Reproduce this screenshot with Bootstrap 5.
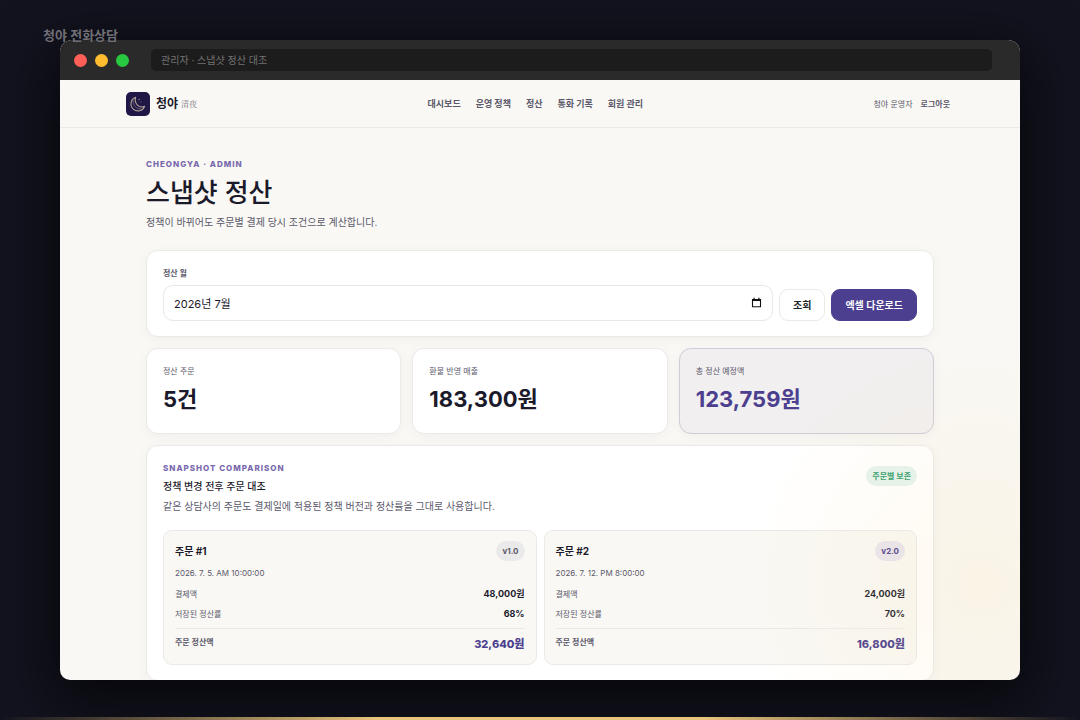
<!DOCTYPE html>
<html lang="ko">
<head>
<meta charset="utf-8">
<meta name="viewport" content="width=device-width, initial-scale=1">
<title>관리자 · 스냅샷 정산 대조</title>
<link href="https://cdn.jsdelivr.net/npm/bootstrap@5.3.0/dist/css/bootstrap.min.css" rel="stylesheet">
<style>
:root { --ink:#1b1a2b; --soft:#5b596b; --violet:#4c3f8f; --line:#ebeae8; --paper:#f9f8f4; }
body { font-family:Inter,"Noto Sans CJK KR",sans-serif; font-size:10px; line-height:16px; color:var(--ink); background:#13131f; }
.stage { height:100vh; padding:40px 60px; overflow:hidden; }
.stage-label { top:27px; left:43px; font-size:13px; font-weight:600; color:#6f6f75; z-index:3; }
.stage-line { height:3px; background:linear-gradient(90deg,transparent,#e8c47c 35%,#e8c47c 65%,transparent); }
.app-window { border-radius:12px 12px 10px 10px; background:var(--paper); box-shadow:0 16px 56px 8px rgba(0,0,0,.65); }
.app-window::after { content:""; position:absolute; inset:0; pointer-events:none; background:radial-gradient(circle 240px at 96% 85%, rgba(255,220,160,.16), rgba(255,220,160,.08) 50%, transparent); }
.title-bar { height:40px; padding:0 28px 0 14px; background:#2a2a2a; }
.dot { width:13px; height:13px; border-radius:50%; }
.dot-close { background:#ff5f57; }
.dot-min { background:#febc2e; }
.dot-max { background:#28c840; }
.address { height:22px; padding:0 10px; margin-left:14px; border-radius:5px; background:#1c1c1c; color:#737373; }
.site-head { height:48px; border-bottom:1px solid var(--line); }
.wrap { width:100%; max-width:828px; margin:0 auto; }
.logo { width:24px; height:24px; margin-right:6px; }
.brand-name { font-size:12px; font-weight:700; color:var(--ink); margin-right:3px; }
.brand-han { font-family:"Noto Serif CJK KR","Noto Sans CJK KR",serif; font-size:8px; color:#77757f; }
.site-head a { color:var(--soft); text-decoration:none; }
.site-nav { font-size:9px; font-weight:700; gap:15px; }
.account { font-size:8px; color:var(--soft); padding-right:4px; }
.eyebrow { font-size:8px; line-height:12px; font-weight:800; letter-spacing:1px; color:#7a69ae; }
.page-top { margin-top:30px; }
h1 { font-size:26px; line-height:36px; font-weight:500; margin:5px 0 3px; }
h2 { font-size:10px; line-height:16px; font-weight:500; margin:4px 0; }
.soft { color:var(--soft); }
.panel { background:#fff; border:1px solid var(--line); border-radius:12px; box-shadow:0 2px 12px rgba(40,35,70,.04); padding:16px 16px 15px; }
.filter { gap:6px; }
.filter label { margin-bottom:6px; }
.tiny { font-size:8px; line-height:12px; color:var(--soft); }
.month { height:36px; font-size:11px; border:1px solid #e8e7e9; border-radius:10px; padding:0 10px; color:var(--ink); }
.month-icon { position:absolute; right:11px; top:12px; width:11px; height:11px; }
.act { height:32px; padding:0 13px; font-size:10px; font-weight:700; border-radius:9px; border:1px solid var(--line); }
.act-main { color:#fff; background:var(--violet); border-color:var(--violet); }
.act-main:hover { color:#fff; background:#3f347b; }
.stats { gap:11px; margin:11px 0; }
.stats > *, .orders > * { flex:1 1 0; }
.orders { gap:7px; }
.stat { height:86px; }
.stat-num { font-size:22px; line-height:28px; font-weight:700; margin-top:8px; }
.stat-total { background:#f1efef; border-color:#cfcbd9; }
.violet { color:var(--violet) !important; }
.pill { font-size:8px; line-height:12px; font-weight:700; padding:4px 6px; border-radius:10px; }
.pill-ok { background:#e5f4ed; color:#2f9c6c; }
.pill-ver { background:#ebeaea; color:var(--soft); }
.pill-new { background:#e8e4ee; color:var(--violet); }
.order { background:var(--paper); border:1px solid var(--line); border-radius:9px; padding:10px 11px 5px; }
.order-date { margin:6px 0 4px; }
.order table { width:100%; font-size:9px; }
.order th { font-size:8px; font-weight:400; color:var(--soft); }
.order td { text-align:right; font-weight:700; }
.order th, .order td { height:21px; line-height:12px; vertical-align:middle; padding:0; }
.order tbody tr:last-child > * { height:24px; padding-bottom:4px; }
.order tfoot th, .order tfoot td { height:31px; border-top:1px solid var(--line); }
.order tfoot th { font-weight:700; padding-bottom:4px; }
.order tfoot td { font-size:11px; font-weight:800; }
</style>
</head>
<body>
<div class="stage position-relative">
  <div class="stage-label position-absolute">청야 전화상담</div>
  <div class="app-window position-relative h-100 overflow-hidden">
    <div class="title-bar d-flex align-items-center gap-2">
      <span class="dot dot-close"></span>
      <span class="dot dot-min"></span>
      <span class="dot dot-max"></span>
      <div class="address flex-grow-1 d-flex align-items-center">관리자 · 스냅샷 정산 대조</div>
    </div>
    <header class="site-head d-flex">
      <div class="wrap d-flex align-items-center justify-content-between">
        <a class="d-flex align-items-center" href="#">
          <svg class="logo" viewBox="0 0 24 24" aria-hidden="true"><rect width="24" height="24" rx="5" fill="#211747"/><path d="M9.6 5.3A7 7 0 1 0 18.6 14.2C13.2 17 8 11.300 9.600 5.300Z" fill="none" stroke="#aca094" stroke-width="1.100" stroke-linejoin="round"/><path d="M7.300 8.200C6.500 13.500 10.500 17.300 15.500 16.900" fill="none" stroke="#857888" stroke-width=".7"/><circle cx="13.200" cy="7.300" r=".6" fill="#b9ac9d"/><circle cx="15" cy="10" r=".5" fill="#857888"/></svg>
          <span class="brand-name">청야</span><span class="brand-han">清夜</span>
        </a>
        <nav class="site-nav d-flex"><a href="#">대시보드</a><a href="#">운영 정책</a><a href="#">정산</a><a href="#">통화 기록</a><a href="#">회원 관리</a></nav>
        <div class="account d-flex gap-2"><span>청야 운영자</span><a class="fw-bold" href="#">로그아웃</a></div>
      </div>
    </header>
    <main class="wrap px-3">
      <div class="px-1">
        <div class="eyebrow page-top">CHEONGYA · ADMIN</div>
        <h1>스냅샷 정산</h1>
        <p class="soft mb-3 pb-1">정책이 바뀌어도 주문별 결제 당시 조건으로 계산합니다.</p>
        <form class="panel filter d-flex align-items-end">
          <div class="flex-grow-1">
            <label class="tiny fw-bold d-block" for="month">정산 월</label>
            <div class="position-relative">
              <input class="month w-100 d-block" id="month" type="text" value="2026년 7월">
              <svg class="month-icon" viewBox="0 0 11 11" aria-hidden="true"><path d="M1.500 2.500h8v7.300h-8Z" fill="none" stroke="#111" stroke-width="1.100"/><path d="M1 2h9v2H1ZM2.500.7h1.200V2H2.500ZM7.300.7h1.200V2H7.300Z" fill="#111"/></svg>
            </div>
          </div>
          <button class="btn act bg-white" type="button">조회</button>
          <button class="btn act act-main" type="button">엑셀 다운로드</button>
        </form>
        <div class="stats d-flex">
          <div class="panel stat"><div class="tiny">정산 주문</div><div class="stat-num">5건</div></div>
          <div class="panel stat"><div class="tiny">환불 반영 매출</div><div class="stat-num">183,300원</div></div>
          <div class="panel stat stat-total"><div class="tiny">총 정산 예정액</div><div class="stat-num violet">123,759원</div></div>
        </div>
        <section class="panel">
          <div class="d-flex justify-content-between align-items-start">
            <div>
              <div class="eyebrow">SNAPSHOT COMPARISON</div>
              <h2>정책 변경 전후 주문 대조</h2>
              <p class="soft mb-3">같은 상담사의 주문도 결제일에 적용된 정책 버전과 정산률을 그대로 사용합니다.</p>
            </div>
            <span class="pill pill-ok mt-1">주문별 보존</span>
          </div>
          <div class="orders d-flex">
            <article class="order">
              <div class="d-flex justify-content-between align-items-center"><strong>주문 #1</strong><span class="pill pill-ver">v1.0</span></div>
              <div class="tiny order-date">2026. 7. 5. AM 10:00:00</div>
              <table>
                <tbody><tr><th scope="row">결제액</th><td>48,000원</td></tr><tr><th scope="row">저장된 정산률</th><td>68%</td></tr></tbody>
                <tfoot><tr><th scope="row">주문 정산액</th><td class="violet">32,640원</td></tr></tfoot>
              </table>
            </article>
            <article class="order">
              <div class="d-flex justify-content-between align-items-center"><strong>주문 #2</strong><span class="pill pill-new">v2.0</span></div>
              <div class="tiny order-date">2026. 7. 12. PM 8:00:00</div>
              <table>
                <tbody><tr><th scope="row">결제액</th><td>24,000원</td></tr><tr><th scope="row">저장된 정산률</th><td>70%</td></tr></tbody>
                <tfoot><tr><th scope="row">주문 정산액</th><td class="violet">16,800원</td></tr></tfoot>
              </table>
            </article>
          </div>
        </section>
      </div>
    </main>
  </div>
  <div class="stage-line position-absolute bottom-0 start-0 w-100"></div>
</div>
<script src="https://cdn.jsdelivr.net/npm/bootstrap@5.3.0/dist/js/bootstrap.bundle.min.js"></script>
</body>
</html>
